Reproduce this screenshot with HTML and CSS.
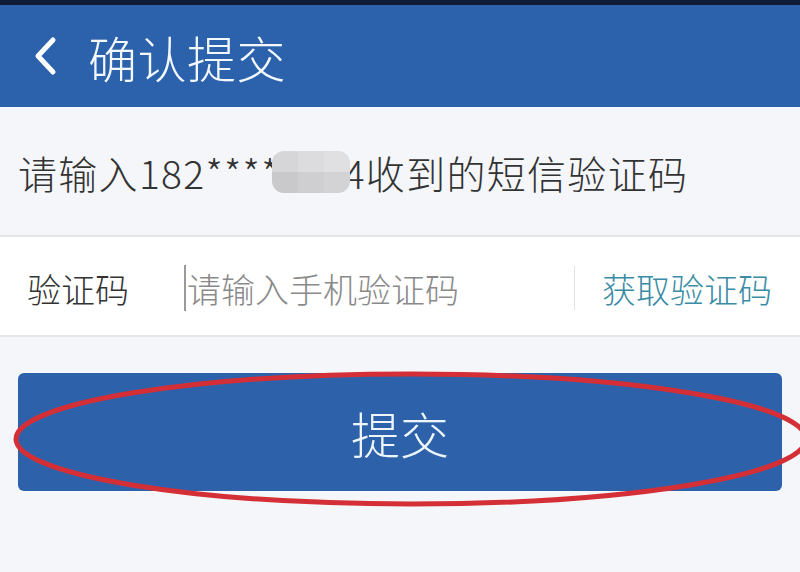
FILE: index.html
```html
<!DOCTYPE html>
<html lang="zh-CN">
<head>
<meta charset="utf-8">
<title>确认提交</title>
<link rel="stylesheet" href="styles.css">
</head>
<body>
<div class="status"></div>
<header class="header">
  <svg class="back" width="26" height="40" viewBox="0 0 26 40"><path d="M21 4 L6 20 L21 36" fill="none" stroke="#fff" stroke-width="5" stroke-linecap="round" stroke-linejoin="round"/></svg>
  <span class="title">确认提交</span>
</header>
<div class="hint">请输入182****<span class="blur"><i></i><i></i><i></i><i></i><i></i><i></i></span>4收到的短信验证码</div>
<div class="row">
  <span class="label">验证码</span>
  <span class="input"><span class="caret"></span><span class="placeholder">请输入手机验证码</span></span>
  <span class="divider"></span>
  <span class="get">获取验证码</span>
</div>
<div class="btn-wrap">
  <div class="btn">提交</div>
  <svg class="mark" width="820" height="150" viewBox="0 0 820 150"><ellipse cx="411" cy="69" rx="395" ry="65" fill="none" stroke="#d42f36" stroke-width="5"/></svg>
</div>
</body>
</html>
```
FILE: styles.css
```css
html, body {
  margin: 0;
  padding: 0;
}
body {
  width: 800px;
  height: 572px;
  overflow: hidden;
  background: #f4f6f9;
  font-family: "Noto Sans CJK SC", "Noto Sans", sans-serif;
  font-weight: 300;
  color: #333;
}
.status {
  height: 5px;
  background: #101c38;
}
.header {
  height: 102px;
  background: #2c61ac;
  display: flex;
  align-items: center;
  padding-left: 32px;
  box-sizing: border-box;
}
.back {
  display: block;
}
.title {
  margin-left: 30px;
  font-size: 49px;
  color: #f2f8fc;
  line-height: 1;
  letter-spacing: 0.5px;
}
.hint {
  height: 128px;
  display: flex;
  align-items: center;
  padding: 2px 0 0 18px;
  box-sizing: border-box;
  font-size: 39px;
  letter-spacing: 1.3px;
  color: #333;
}
.blur {
  display: inline-grid;
  grid-template-columns: repeat(3, 1fr);
  width: 78px;
  height: 42px;
  border-radius: 12px;
  overflow: hidden;
  margin: 0 -6px 0 -8px;
  position: relative;
}
.blur i:nth-child(1) { background: #d6d6d8; }
.blur i:nth-child(2) { background: #dcdcde; }
.blur i:nth-child(3) { background: #e0e0e2; }
.blur i:nth-child(4) { background: #c9c9cb; }
.blur i:nth-child(5) { background: #cfcfd1; }
.blur i:nth-child(6) { background: #d3d3d5; }
.row {
  height: 102px;
  background: #fff;
  border-top: 2px solid #e4e6ea;
  border-bottom: 2px solid #e4e6ea;
  box-sizing: border-box;
  display: flex;
  align-items: center;
  padding: 4px 0 0 27px;
}
.label {
  font-size: 34px;
  color: #333;
  width: 157px;
}
.input {
  display: flex;
  align-items: center;
  flex: 1;
}
.caret {
  width: 2px;
  height: 46px;
  background: #9a9a9a;
  margin-right: 1px;
}
.placeholder {
  font-size: 34px;
  color: #8a8a8a;
}
.divider {
  width: 1px;
  height: 44px;
  background: #e0e0e0;
}
.get {
  font-size: 34px;
  color: #3a8ca6;
  margin: 0 28px 0 27px;
}
.btn-wrap {
  position: relative;
  margin: 36px 18px 0 18px;
}
.btn {
  height: 118px;
  background: #2d62ab;
  border-radius: 6px;
  display: flex;
  align-items: center;
  justify-content: center;
  font-size: 49px;
  color: #eef6fb;
}
.mark {
  position: absolute;
  left: -18px;
  top: -3px;
  pointer-events: none;
}
```
